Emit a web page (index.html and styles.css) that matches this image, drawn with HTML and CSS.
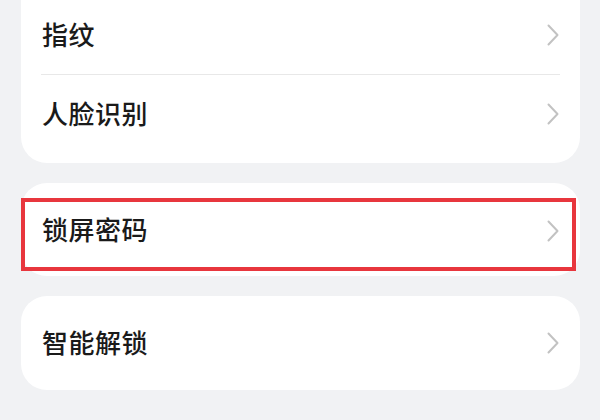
FILE: index.html
```html
<!DOCTYPE html>
<html lang="zh-CN">
	<head>
		<meta charset="UTF-8" />
		<meta name="viewport" content="width=device-width, initial-scale=1.0" />
		<title>密码与安全</title>
		<link rel="stylesheet" href="styles.css">
	</head>
	<body>
		<main class="settings">
			<!-- 生物识别 -->
			<section class="card card--top">
				<div class="row">
					<span class="row__label">指纹</span>
					<svg class="row__arrow" viewBox="0 0 12 22"><path d="M1.5 1.5 L10.5 11 L1.5 20.5" /></svg>
				</div>
				<div class="row__divider"></div>
				<div class="row">
					<span class="row__label">人脸识别</span>
					<svg class="row__arrow" viewBox="0 0 12 22"><path d="M1.5 1.5 L10.5 11 L1.5 20.5" /></svg>
				</div>
			</section>

			<!-- 锁屏密码（标记框） -->
			<section class="card card--single card--marked">
				<div class="row">
					<span class="row__label">锁屏密码</span>
					<svg class="row__arrow" viewBox="0 0 12 22"><path d="M1.5 1.5 L10.5 11 L1.5 20.5" /></svg>
				</div>
				<div class="highlight"></div>
			</section>

			<section class="card card--single">
				<div class="row">
					<span class="row__label">智能解锁</span>
					<svg class="row__arrow" viewBox="0 0 12 22"><path d="M1.5 1.5 L10.5 11 L1.5 20.5" /></svg>
				</div>
			</section>
		</main>
	</body>
</html>
```

FILE: styles.css
```css
body {
	margin: 0;
	background-color: #f1f2f4;
	font-family: "Noto Sans CJK SC", "Noto Sans", sans-serif;
	overflow: hidden;
}

.settings {
	display: flex;
	flex-direction: column;
	gap: 20px;
	padding: 0 20px 0 21px;
}

.card {
	background-color: #fff;
	border-radius: 26px;
}

.card--top {
	margin-top: -4px;
	padding-bottom: 10px;
	border-radius: 0 0 26px 26px;
}

.card--single {
	height: 94px;
	display: flex;
	flex-direction: column;
	justify-content: center;
}

.card--marked {
	position: relative;
	height: 93px;
}

.card--marked .row {
	margin-top: 2px;
}

.row {
	height: 78px;
	display: flex;
	align-items: center;
	justify-content: space-between;
	padding: 0 21px 0 21px;
}

.row__label {
	font-size: 26px;
	font-weight: 500;
	color: #1a1a1a;
	letter-spacing: 0.5px;
	margin-bottom: 4px;
}

.row__arrow {
	width: 12px;
	height: 22px;
	fill: none;
	stroke: #c2c2c2;
	stroke-width: 2;
	stroke-linecap: round;
	stroke-linejoin: round;
}

.row__divider {
	height: 1px;
	margin: 0 20px;
	background-color: #e8e8e8;
}

/* 标记框 */
.highlight {
	position: absolute;
	top: 15px;
	left: 0;
	right: 4px;
	bottom: 5px;
	border: 4px solid #e8363d;
}
```
